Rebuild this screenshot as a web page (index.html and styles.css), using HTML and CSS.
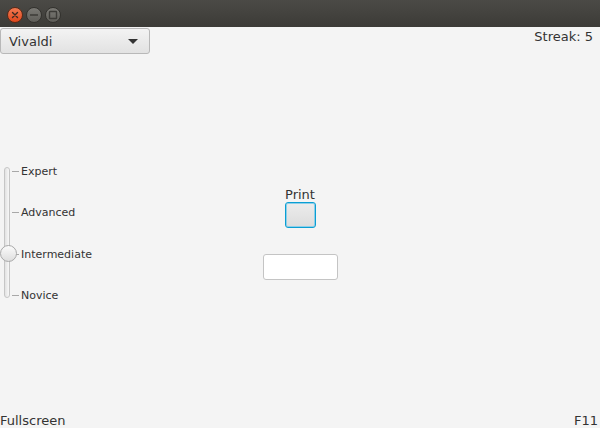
FILE: index.html
```html
<!DOCTYPE html>
<html>
<head>
<meta charset="utf-8">
<link rel="stylesheet" href="styles.css">
</head>
<body>
<div class="titlebar">
  <span class="wbtn close"><svg width="8" height="8" viewBox="0 0 8 8"><path d="M1.5 1.5L6.5 6.5M6.5 1.5L1.5 6.5" stroke="#3b2a22" stroke-width="1.4" stroke-linecap="round"/></svg></span>
  <span class="wbtn"><svg width="10" height="10" viewBox="0 0 10 10"><path d="M1 5H9" stroke="#3c3b37" stroke-width="1.5"/></svg></span>
  <span class="wbtn"><svg width="10" height="10" viewBox="0 0 10 10"><rect x="1.5" y="1.5" width="7" height="7" rx="0.5" fill="none" stroke="#3c3b37" stroke-width="1.4"/></svg></span>
</div>
<div class="top">
  <div class="combo"><span>Vivaldi</span><span class="arrow"></span></div>
  <div class="streak">Streak: 5</div>
</div>
<div class="main">
  <div class="slider">
    <div class="track"></div>
    <div class="thumb"></div>
    <div class="labels">
      <div class="row"><span class="tick"></span><span>Expert</span></div>
      <div class="row"><span class="tick"></span><span>Advanced</span></div>
      <div class="row"><span class="tick"></span><span>Intermediate</span></div>
      <div class="row"><span class="tick"></span><span>Novice</span></div>
    </div>
  </div>
  <div class="center">
    <div class="print">Print</div>
    <button class="pbtn"></button>
    <input class="field" type="text">
  </div>
  <div></div>
</div>
<div class="bottom">
  <span>Fullscreen</span>
  <span>F11</span>
</div>
</body>
</html>
```
FILE: styles.css
```css
html, body {
  margin: 0;
  padding: 0;
}
body {
  width: 600px;
  height: 428px;
  background: #f4f4f4;
  font-family: "DejaVu Sans", sans-serif;
  color: #333;
  display: flex;
  flex-direction: column;
  overflow: hidden;
}
.titlebar {
  height: 27px;
  flex: none;
  background: linear-gradient(#4b4a46, #3c3b37);
  display: flex;
  align-items: center;
  gap: 3px;
  padding: 2px 0 0 7px;
  box-sizing: border-box;
}
.wbtn {
  width: 16px;
  height: 16px;
  box-sizing: border-box;
  border-radius: 50%;
  background: linear-gradient(#7a7974, #5f5e59);
  border: 1px solid #33322e;
  display: flex;
  align-items: center;
  justify-content: center;
}
.wbtn.close {
  background: linear-gradient(#f27a52, #e0471c);
  border-color: #5a2a18;
}
.top {
  height: 27px;
  flex: none;
  display: flex;
  justify-content: space-between;
  align-items: flex-start;
  padding-top: 1px;
  box-sizing: border-box;
}
.combo {
  width: 150px;
  height: 26px;
  box-sizing: border-box;
  border: 1px solid #b8b8b8;
  border-radius: 3px;
  background: linear-gradient(#f3f3f3, #e2e2e2);
  display: flex;
  align-items: center;
  justify-content: space-between;
  padding: 0 11px 0 8px;
  font-size: 13px;
}
.arrow {
  width: 0;
  height: 0;
  border-left: 5px solid transparent;
  border-right: 5px solid transparent;
  border-top: 5px solid #333;
}
.streak {
  font-size: 13px;
  line-height: 15px;
  padding-right: 7px;
  padding-top: 1px;
}
.main {
  flex: 1;
  display: grid;
  grid-template-columns: 1fr auto 1fr;
  align-items: start;
}
.slider {
  margin-top: 111px;
  position: relative;
  height: 137px;
  display: flex;
}
.track {
  margin-left: 4px;
  margin-top: 2px;
  width: 6px;
  height: 131px;
  box-sizing: border-box;
  border: 1px solid #c6c6c6;
  border-radius: 3px;
  background: linear-gradient(90deg, #e2e2e2, #f8f8f8);
}
.thumb {
  position: absolute;
  left: 0;
  top: 80px;
  width: 17px;
  height: 17px;
  box-sizing: border-box;
  border-radius: 50%;
  border: 1px solid #a9a9a9;
  background: linear-gradient(#fbfbfb, #dedede);
}
.labels {
  margin-left: 2px;
  display: flex;
  flex-direction: column;
  justify-content: space-between;
  height: 137px;
}
.row {
  display: flex;
  align-items: center;
  gap: 2px;
  font-size: 11px;
  line-height: 13px;
}
.tick {
  width: 7px;
  height: 1px;
  background: #a8a8a8;
}
.center {
  margin-top: 133px;
  display: flex;
  flex-direction: column;
  align-items: center;
}
.print {
  font-size: 13px;
  line-height: 15px;
}
.pbtn {
  width: 31px;
  height: 26px;
  margin: 0;
  padding: 0;
  box-sizing: border-box;
  border: 1px solid #0a9ed3;
  box-shadow: inset 0 0 0 1px #8ccfe9;
  border-radius: 3px;
  background: linear-gradient(#ececec, #dcdcdc);
}
.field {
  margin-top: 26px;
  width: 75px;
  height: 26px;
  box-sizing: border-box;
  border: 1px solid #c4c4c4;
  border-radius: 3px;
  background: #fff;
  padding: 0;
}
.bottom {
  flex: none;
  display: flex;
  justify-content: space-between;
  font-size: 13px;
  line-height: 15px;
  padding-right: 2px;
}
```
